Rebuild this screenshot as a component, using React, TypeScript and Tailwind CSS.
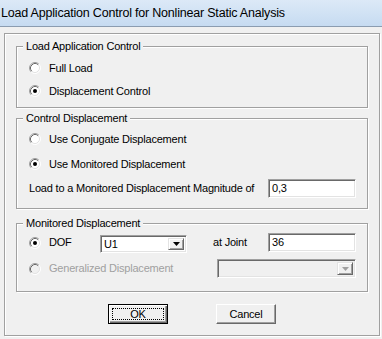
import React from 'react';

const sunken =
  'border border-t-[#a0a0a0] border-l-[#a0a0a0] border-r-white border-b-white shadow-[inset_1px_1px_0_#696969,inset_-1px_-1px_0_#e3e3e3]';

const Radio: React.FC<{ checked?: boolean; disabled?: boolean }> = ({ checked, disabled }) => (
  <svg width="12" height="12" viewBox="0 0 12 12" className="shrink-0">
    <circle cx="6" cy="6" r="5" fill={disabled ? '#f0f0f0' : '#ffffff'} />
    <path d="M2.11 9.89 A5.5 5.5 0 0 1 9.89 2.11" fill="none" stroke="#a0a0a0" strokeWidth="1" />
    <path d="M9.89 2.11 A5.5 5.5 0 0 1 2.11 9.89" fill="none" stroke="#ffffff" strokeWidth="1" />
    <path d="M2.82 9.18 A4.5 4.5 0 0 1 9.18 2.82" fill="none" stroke="#696969" strokeWidth="1" />
    <path d="M9.18 2.82 A4.5 4.5 0 0 1 2.82 9.18" fill="none" stroke="#e3e3e3" strokeWidth="1" />
    {checked && <circle cx="6" cy="6" r="2" fill="#000" />}
  </svg>
);

const Group: React.FC<{ label: string; className: string; children: React.ReactNode }> = ({
  label,
  className,
  children,
}) => (
  <div
    className={`relative border border-[#a0a0a0] shadow-[inset_1px_1px_0_#fff,1px_1px_0_#fff] ${className}`}
  >
    <span className="absolute -top-[8px] left-[6px] bg-[#f0f0f0] px-[3px] leading-[14px]">{label}</span>
    {children}
  </div>
);

const DropArrow: React.FC<{ disabled?: boolean }> = ({ disabled }) => (
  <div className="w-[16px] h-full bg-[#f0f0f0] border border-t-[#e3e3e3] border-l-[#e3e3e3] border-r-[#696969] border-b-[#696969] shadow-[inset_1px_1px_0_#fff,inset_-1px_-1px_0_#a0a0a0] flex items-center justify-center">
    <svg width="7" height="4" viewBox="0 0 7 4">
      <path d="M0 0 H7 L3.5 4 Z" fill={disabled ? '#a0a0a0' : '#000'} />
    </svg>
  </div>
);

const App: React.FC = () => {
  return (
    <div className="w-[382px] h-[339px] overflow-hidden bg-[#f0f0f0] text-black font-['Liberation_Sans',Arial,sans-serif] text-[11px] tracking-[-0.2px]">
      {/* Title bar */}
      <div className="h-[27px] border-b border-[#8b9cb0] bg-gradient-to-b from-[#dce9f7] to-[#c6dbf1] pl-[1px] flex items-center">
        <span className="text-[12.5px] tracking-[-0.2px] text-black">
          Load Application Control for Nonlinear Static Analysis
        </span>
      </div>

      <div className="pt-[6px] pl-[4px] pr-[2px]">
        <div className="h-[303px] border border-[#a0a0a0] shadow-[inset_1px_1px_0_#fff,1px_1px_0_#fff] pt-[12px] px-[11px]">
          {/* Load Application Control */}
          <Group label="Load Application Control" className="h-[62px] pt-[13px] pl-[12px]">
            <div className="flex flex-col gap-[7px]">
              <div className="h-[16px] flex items-center gap-[8px]">
                <Radio />
                <span>Full Load</span>
              </div>
              <div className="h-[16px] flex items-center gap-[8px]">
                <Radio checked />
                <span>Displacement Control</span>
              </div>
            </div>
          </Group>

          {/* Control Displacement */}
          <Group label="Control Displacement" className="mt-[10px] h-[91px] pt-[12px] pl-[12px] pr-[11px]">
            <div className="h-[16px] flex items-center gap-[8px]">
              <Radio />
              <span>Use Conjugate Displacement</span>
            </div>
            <div className="mt-[9px] h-[16px] flex items-center gap-[8px]">
              <Radio checked />
              <span>Use Monitored Displacement</span>
            </div>
            <div className="mt-[7px] h-[19px] flex items-center justify-between">
              <span>Load to a Monitored Displacement Magnitude of</span>
              <div className={`w-[88px] h-[19px] bg-white pl-[3px] flex items-center ${sunken}`}>0,3</div>
            </div>
          </Group>

          {/* Monitored Displacement */}
          <Group label="Monitored Displacement" className="mt-[14px] h-[69px] pt-[9px] pl-[12px] pr-[11px]">
            <div className="h-[19px] flex items-center">
              <Radio checked />
              <span className="ml-[8px] w-[51px]">DOF</span>
              <div className={`w-[87px] h-[18px] mt-[3px] bg-white flex items-center justify-between p-[2px] ${sunken}`}>
                <span className="pl-[1px]">U1</span>
                <DropArrow />
              </div>
              <span className="ml-[26px]">at Joint</span>
              <div className={`ml-auto w-[88px] h-[19px] bg-white pl-[3px] flex items-center ${sunken}`}>36</div>
            </div>
            <div className="mt-[7px] h-[19px] flex items-center">
              <Radio disabled />
              <span className="ml-[8px] text-[#a0a0a0]">Generalized Displacement</span>
              <div className={`ml-auto w-[139px] h-[19px] bg-[#f0f0f0] flex items-center justify-end p-[2px] ${sunken}`}>
                <DropArrow disabled />
              </div>
            </div>
          </Group>

          {/* Buttons */}
          <div className="mt-[12px] flex justify-center gap-[48px]">
            <button className="w-[60px] h-[20px] border border-black bg-[#f0f0f0] shadow-[inset_1px_1px_0_#fff,inset_-1px_-1px_0_#696969,inset_-2px_-2px_0_#a0a0a0] p-[3px]">
              <span className="w-full h-full border border-dotted border-black flex items-center justify-center leading-none">
                OK
              </span>
            </button>
            <button className="w-[60px] h-[20px] bg-[#f0f0f0] border border-t-white border-l-white border-r-[#696969] border-b-[#696969] shadow-[inset_-1px_-1px_0_#a0a0a0] flex items-center justify-center">
              Cancel
            </button>
          </div>
        </div>
      </div>
    </div>
  );
};

export default App;
